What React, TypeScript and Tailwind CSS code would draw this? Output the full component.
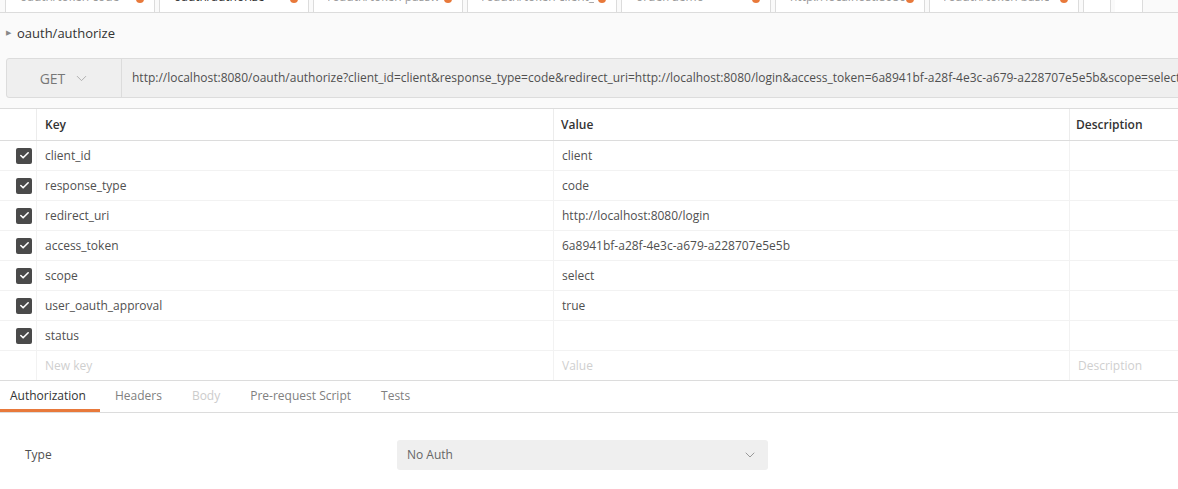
import React from "react"
import { Check, ChevronDown } from "lucide-react"

const tabs = [
  "oauth/token code",
  "oauth/authorize",
  "/oauth/token passw",
  "/oauth/token client_",
  "order/demo",
  "http://localhost:8080",
  "/oauth/token basic",
]

const params: [string, string][] = [
  ["client_id", "client"],
  ["response_type", "code"],
  ["redirect_uri", "http://localhost:8080/login"],
  ["access_token", "6a8941bf-a28f-4e3c-a679-a228707e5e5b"],
  ["scope", "select"],
  ["user_oauth_approval", "true"],
  ["status", ""],
]

const url =
  "http://localhost:8080/oauth/authorize?client_id=client&response_type=code&redirect_uri=http://localhost:8080/login&access_token=6a8941bf-a28f-4e3c-a679-a228707e5e5b&scope=select&user_oauth_approval=true&status"

function TabBar() {
  return (
    <div className="h-[13px] overflow-hidden border-b border-[#dcdcdc]">
      <div className="flex gap-[4px] pl-[5px] -mt-[20px]">
        {tabs.map((name, i) => (
          <div
            key={name}
            className={
              i === 1
                ? "w-[150px] h-[33px] shrink-0 border-x border-[#dcdcdc] bg-white flex items-center justify-between pl-[14px] pr-[10px] text-[#333]"
                : "w-[150px] h-[33px] shrink-0 border-x border-[#dcdcdc] bg-white flex items-center justify-between pl-[14px] pr-[10px] text-[#9a9a9a]"
            }
          >
            <span className="whitespace-nowrap overflow-hidden">{name}</span>
            <span className="w-[8px] h-[8px] rounded-full bg-[#e8793b] mt-[4px]" />
          </div>
        ))}
        <div className="w-[28px] h-[33px] shrink-0 border-x border-[#dcdcdc] bg-white flex items-center justify-center text-[#999]">
          +
        </div>
        <div className="w-[28px] h-[33px] shrink-0 border-r border-[#dcdcdc] bg-white" />
      </div>
    </div>
  )
}

function RequestBar() {
  return (
    <div className="pl-[6px] pb-[10px] border-b border-[#dcdcdc]">
      <div className="flex h-[40px] border border-[#dcdcdc] rounded-[3px] bg-[#efefef] -mr-[6px] overflow-hidden">
        <div className="w-[115px] shrink-0 border-r border-[#dcdcdc] flex items-center justify-center gap-[8px] pl-[2px]">
          <span className="text-[14px] text-[#777]">GET</span>
          <ChevronDown size={17} strokeWidth={1.3} className="text-[#aaa]" />
        </div>
        <div className="flex items-center pl-[10px] whitespace-nowrap overflow-hidden text-[#505050]">
          {url}
        </div>
      </div>
    </div>
  )
}

function Checkbox() {
  return (
    <span className="w-[16px] h-[16px] rounded-[2px] bg-[#4a4a4a] flex items-center justify-center">
      <Check size={11} strokeWidth={3.5} className="text-white" />
    </span>
  )
}

function ParamsTable() {
  const cols = "grid grid-cols-[37px_517px_516px_1fr]"
  return (
    <div>
      <div className={`${cols} h-[32px] border-b border-[#dcdcdc] font-semibold text-[#333]`}>
        <div className="border-r border-[#ececec]" />
        <div className="flex items-center pl-[8px] border-r border-[#ececec]">Key</div>
        <div className="flex items-center pl-[7px] border-r border-[#ececec]">Value</div>
        <div className="flex items-center pl-[6px]">Description</div>
      </div>
      {params.map(([k, v]) => (
        <div key={k} className={`${cols} h-[30px] border-b border-[#f2f2f2]`}>
          <div className="flex items-center pl-[16px] border-r border-[#f2f2f2]">
            <Checkbox />
          </div>
          <div className="flex items-center pl-[8px] border-r border-[#f2f2f2]">{k}</div>
          <div className="flex items-center pl-[8px] border-r border-[#f2f2f2]">{v}</div>
          <div />
        </div>
      ))}
      <div className={`${cols} h-[29px] text-[#cfcfcf]`}>
        <div className="border-r border-[#f2f2f2]" />
        <div className="flex items-center pl-[8px] border-r border-[#f2f2f2]">New key</div>
        <div className="flex items-center pl-[8px] border-r border-[#f2f2f2]">Value</div>
        <div className="flex items-center pl-[8px]">Description</div>
      </div>
    </div>
  )
}

function SectionTabs() {
  return (
    <div className="flex h-[33px] border-y border-[#dcdcdc] bg-white">
      <div className="flex items-center pl-[10px] pr-[14px] pt-[1px] text-[#333] border-b-[3px] border-[#e8793b]">
        Authorization
      </div>
      <div className="flex items-center px-[15px] pt-[1px] text-[#808080] border-b-[3px] border-transparent">Headers</div>
      <div className="flex items-center px-[15px] pt-[1px] text-[#cccccc] border-b-[3px] border-transparent">Body</div>
      <div className="flex items-center px-[15px] pt-[1px] text-[#808080] border-b-[3px] border-transparent">Pre-request Script</div>
      <div className="flex items-center px-[15px] pt-[1px] text-[#808080] border-b-[3px] border-transparent">Tests</div>
    </div>
  )
}

export default function App(): JSX.Element {
  return (
    <div className="w-[1178px] h-[489px] overflow-hidden bg-white font-['Open_Sans',sans-serif] text-[12px] text-[#505050]">
      <div className="bg-[#fafafa]">
        <TabBar />
        <div className="h-[45px] flex items-center pl-[6px] pb-[4px] gap-[6px]">
          <span className="text-[7px] text-[#888]">▶</span>
          <span className="text-[13px] text-[#333]">oauth/authorize</span>
        </div>
        <RequestBar />
      </div>
      <ParamsTable />
      <SectionTabs />
      <div className="flex items-center pt-[27px] pl-[25px]">
        <div className="w-[372px] text-[#505050]">Type</div>
        <div className="w-[371px] h-[30px] rounded-[3px] bg-[#efefef] flex items-center justify-between pl-[10px] pr-[10px] text-[#666]">
          <span>No Auth</span>
          <ChevronDown size={16} strokeWidth={1.5} className="text-[#999]" />
        </div>
      </div>
    </div>
  )
}
